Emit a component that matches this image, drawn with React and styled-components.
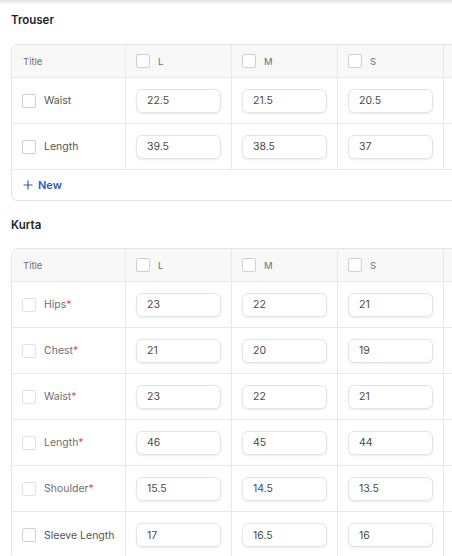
import React from "react";
import styled, { createGlobalStyle } from "styled-components";
import { Plus } from "lucide-react";

const GlobalStyle = createGlobalStyle`
  html, body {
    margin: 0;
    padding: 0;
    background: #fff;
    overflow: hidden;
  }
  body {
    font-family: Inter, "Noto Sans", sans-serif;
    color: #333;
  }
`;

const TopShade = styled.div`
  height: 5px;
  background: linear-gradient(#e2e2e2, #ffffff);
`;

const Page = styled.div`
  padding: 7px 0 0 11px;
  width: 560px;
`;

const SectionTitle = styled.div`
  font-size: 11.5px;
  font-weight: 600;
  line-height: 16px;
  color: #1f1f1f;
  margin: ${p => (p.first ? 0 : 16)}px 0 ${p => (p.first ? 16 : 15)}px;
`;

const Card = styled.div`
  border: 1px solid #e4e4e4;
  border-radius: 6px;
  overflow: hidden;
  width: 560px;
`;

const Row = styled.div`
  display: grid;
  grid-template-columns: 114px 106px 106px 106px 1fr;
  height: ${p => (p.header ? 33 : 46)}px;
  background: ${p => (p.header ? "#f8f8f8" : "#fff")};
  border-bottom: 1px solid #e8e8e8;
  box-sizing: border-box;

  &:last-child {
    border-bottom: none;
  }
`;

const Cell = styled.div`
  display: flex;
  align-items: center;
  gap: 8px;
  padding: 0 10px;
  border-right: 1px solid #e8e8e8;
  box-sizing: border-box;
  min-width: 0;
  white-space: nowrap;
`;

const HeadText = styled.span`
  font-size: 9.5px;
  color: #6f6f6f;
  padding-left: ${p => (p.indent ? 1 : 0)}px;
`;

const Box = styled.span`
  width: 14px;
  height: 14px;
  flex: none;
  box-sizing: border-box;
  border: 1px solid ${p => (p.faint ? "#e2e2e2" : "#cfcfcf")};
  border-radius: 2px;
  background: #fff;
`;

const Label = styled.span`
  font-size: 10.5px;
  color: ${p => (p.muted ? "#707070" : "#555")};
`;

const Star = styled.span`
  color: #e5484d;
`;

const Field = styled.div`
  width: 85px;
  height: 24px;
  box-sizing: border-box;
  border: 1px solid #e4e4e4;
  border-radius: 6px;
  box-shadow: 0 1px 2px rgba(0, 0, 0, 0.08);
  background: #fff;
  display: flex;
  align-items: center;
  padding: 0 10px;
  font-size: 10.5px;
  color: #4a4a4a;
`;

const NewRow = styled.div`
  height: 30px;
  display: flex;
  align-items: center;
  gap: 3px;
  padding-left: 9px;
  color: #2d58c8;
  font-size: 11px;
  font-weight: 600;
`;

const sizes = ["L", "M", "S"];

const trouser = [
  { name: "Waist", values: ["22.5", "21.5", "20.5"] },
  { name: "Length", values: ["39.5", "38.5", "37"] },
];

const kurta = [
  { name: "Hips", values: ["23", "22", "21"], required: true },
  { name: "Chest", values: ["21", "20", "19"], required: true },
  { name: "Waist", values: ["23", "22", "21"], required: true },
  { name: "Length", values: ["46", "45", "44"], required: true },
  { name: "Shoulder", values: ["15.5", "14.5", "13.5"], required: true },
  { name: "Sleeve Length", values: ["17", "16.5", "16"] },
];

function SizeTable({ rows, withNew }) {
  return (
    <Card>
      <Row header>
        <Cell>
          <HeadText indent>Title</HeadText>
        </Cell>
        {sizes.map(s => (
          <Cell key={s}>
            <Box />
            <HeadText>{s}</HeadText>
          </Cell>
        ))}
        <Cell />
      </Row>
      {rows.map(row => (
        <Row key={row.name}>
          <Cell>
            <Box faint={row.required} />
            <Label muted={row.required}>
              {row.name}
              {row.required && <Star>*</Star>}
            </Label>
          </Cell>
          {row.values.map((v, i) => (
            <Cell key={i}>
              <Field>{v}</Field>
            </Cell>
          ))}
          <Cell />
        </Row>
      ))}
      {withNew && (
        <NewRow>
          <Plus size={14} strokeWidth={2} />
          New
        </NewRow>
      )}
    </Card>
  );
}

export default function App() {
  return (
    <>
      <GlobalStyle />
      <TopShade />
      <Page>
        <SectionTitle first>Trouser</SectionTitle>
        <SizeTable rows={trouser} withNew />
        <SectionTitle>Kurta</SectionTitle>
        <SizeTable rows={kurta} />
      </Page>
    </>
  );
}
